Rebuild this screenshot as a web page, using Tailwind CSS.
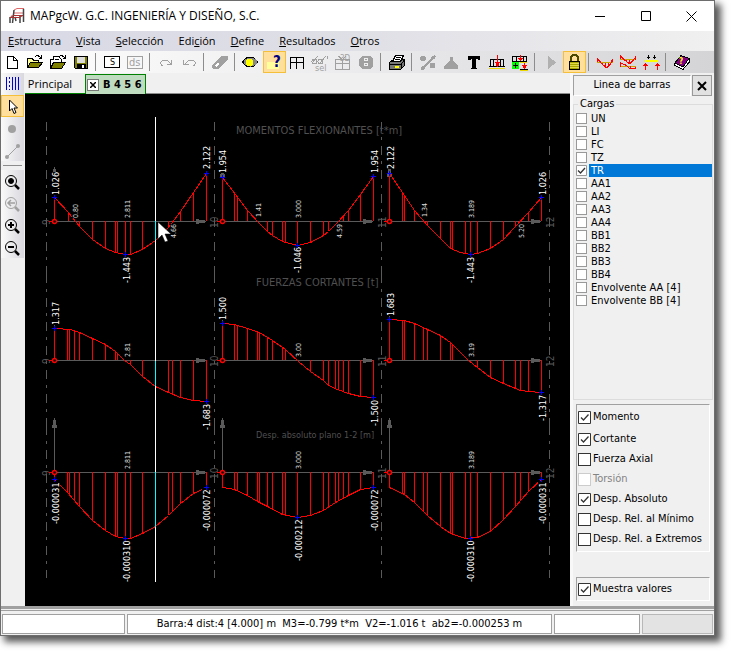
<!DOCTYPE html>
<html lang="es">
<head>
  <meta charset="UTF-8">
  <meta name="viewport" content="width=device-width, initial-scale=1.0">
  <title>MAPgcW</title>
  <script src="https://cdn.jsdelivr.net/npm/@tailwindcss/browser@4"></script>
</head>
<body class="h-screen overflow-hidden bg-white pr-[16px] pb-[15px] font-['DejaVu_Sans_Condensed','Noto_Sans',sans-serif] text-[11px] text-black">

  <div class="flex h-full flex-col border border-[#6d6d6d] bg-[#f0f0f0] shadow-[5px_5px_7px_1px_rgba(0,0,0,0.65)]">

    <!-- Title bar -->
    <header class="flex h-[30px] shrink-0 items-center bg-white font-['Open_Sans',sans-serif] text-xs">
      <svg class="ml-2 size-4" viewBox="0 0 16 16" fill="none">
        <path d="M5 2l3-1.500h7M5 5h9M2 8h3" stroke="#d66" />
        <path d="M5 2L3.500 15M1 9v6M6 9l1 4M14.500 1v13M11 8v7" stroke="#444" stroke-width="1.500" />
        <path d="M1 9.500l4-2h9M1 9.500h9l4-2" stroke="#a33" />
      </svg>
      <h1 class="ml-[5px] flex-1 whitespace-nowrap">MAPgcW. G.C. INGENIERÍA Y DISEÑO, S.C.</h1>
      <button aria-label="Minimizar" class="flex h-full w-[45px] items-center justify-center"><svg class="size-[11px]" viewBox="0 0 11 11"><path d="M0 5.500h10" stroke="#000" /></svg></button>
      <button aria-label="Maximizar" class="flex h-full w-[45px] items-center justify-center"><svg class="size-[11px]" viewBox="0 0 11 11"><path d="M1.500 .5h9v9h-9z" stroke="#000" fill="none" /></svg></button>
      <button aria-label="Cerrar" class="flex h-full w-[46px] items-center justify-center"><svg class="size-[11px]" viewBox="0 0 11 11"><path d="M.5 .5l10 10M10.500 .5l-10 10" stroke="#000" /></svg></button>
    </header>

    <!-- Menu -->
    <nav class="flex h-[20px] shrink-0 items-center gap-[15px] bg-linear-to-r from-[#d9d9e6] via-[#dfdfe6] to-[#f0f0f0] pl-[7px] font-['Open_Sans',sans-serif] text-[11px] whitespace-nowrap">
      <a href="#"><u>E</u>structura</a>
      <a href="#"><u>V</u>ista</a>
      <a href="#"><u>S</u>elección</a>
      <a href="#">Edi<u>c</u>ión</a>
      <a href="#"><u>D</u>efine</a>
      <a href="#"><u>R</u>esultados</a>
      <a href="#"><u>O</u>tros</a>
    </nav>

    <!-- Toolbar -->
    <div class="flex h-[22px] shrink-0 bg-linear-to-r from-white via-[#ebebed] to-[#d4d4d6] [&>button]:w-[23px] [&>button]:shrink-0 [&>i]:my-[2px] [&>i]:mr-[5px] [&>i]:ml-[2px] [&>i]:w-px [&>i]:bg-[#8c8c8c] [&_svg]:h-[22px] [&_svg]:w-[23px] [&_svg]:[shape-rendering:crispEdges]">
      <button aria-label="Nuevo"><svg viewBox="0 0 23 22"><path d="M6.500 5.500h6l4 4v8h-10zM12.500 5.500v4h4" fill="#fff" stroke="#000" /></svg></button>
      <button aria-label="Abrir"><svg viewBox="0 0 23 22"><path d="M3.500 16.500v-9h5l1 2h5v3" fill="#ff9" stroke="#000" /><path d="M3.500 16.500l3-5h12l-4 5z" fill="#808000" stroke="#000" /><path d="M11 6q3-3 6 1M17.500 4v3.500h-3" fill="none" stroke="#000" /></svg></button>
      <button aria-label="Importar"><svg viewBox="0 0 23 22"><path d="M3.500 17.500v-9h3v-3h5l3 3v4" fill="#fff" stroke="#000" /><path d="M3.500 17.500l3-6h12l-4 6z" fill="#808000" stroke="#000" /><path d="M8 8.500h4M12 6q3-3 6 1M18.500 4v3.500h-3" fill="none" stroke="#000" /></svg></button>
      <button aria-label="Guardar"><svg viewBox="0 0 23 22"><path d="M4.500 5.500h13v12h-12l-1-1z" fill="#808000" stroke="#000" /><path d="M7 6h8v6H7z" fill="#ddd" /><path d="M7 13h9v4H7z" /><path d="M12 14h2v3h-2z" fill="#fff" /></svg></button>
      <i></i>
      <button aria-label="S"><svg viewBox="0 0 23 22"><path d="M3.500 5.500h15v11h-15z" fill="#fff" stroke="#000" /><text x="9" y="14" font-size="8" font-family="DejaVu Sans">S</text></svg></button>
      <button aria-label="ds" disabled><svg viewBox="0 0 23 22"><path d="M3.500 5.500h15v12h-15z" fill="none" stroke="#a0a0a0" /><text x="5" y="15" font-size="11" fill="#a0a0a0">ds</text></svg></button>
      <i></i>
      <button aria-label="Rehacer" disabled><svg viewBox="0 0 23 22"><path d="M8 15q-4-2-1-5 4-3 9 3M16.500 8.500v5h-5" fill="none" stroke="#a0a0a0" /></svg></button>
      <button aria-label="Deshacer" disabled><svg viewBox="0 0 23 22"><path d="M15 15q4-2 1-5-4-3-9 3M5.500 8.500v5h5" fill="none" stroke="#a0a0a0" /></svg></button>
      <i></i>
      <button aria-label="Borrar" disabled><svg viewBox="0 0 23 22"><path d="M3 15l9-10h7v3l-9 10H4z" fill="#a0a0a0" /><path d="M6 14l3-3 1 2-3 3z" fill="#fff" /></svg></button>
      <i></i>
      <button aria-label="Ver"><svg viewBox="0 0 23 22"><path d="M2 11q2-5 8-5.500 6 .5 8 5.500-2 5-8 5.500-6-.5-8-5.500z" /><ellipse cx="10.500" cy="11" rx="6.500" ry="4.500" fill="#888" /><circle cx="9.500" cy="11.500" r="3.700" fill="#ff0" /></svg></button>
      <button aria-label="Ayuda" class="border border-[#f5bf3a] bg-[#ffdf9b]"><svg class="-m-px" viewBox="0 0 23 22"><path d="M4 11h12v7H4z" fill="#ffff9c" /><text x="10" y="16" font-size="15" font-weight="bold" fill="#000080">?</text></svg></button>
      <button aria-label="Ventanas"><svg viewBox="0 0 23 22"><path d="M4.500 18V6.500h13V18M4 11.500h14M10.500 6v12" fill="none" stroke="#000" /></svg></button>
      <button aria-label="Ver selección" disabled><svg viewBox="0 0 23 22" fill="none" stroke="#a0a0a0"><path d="M3 12l6-7M11 12l6-7M18 5v3" /><circle cx="5.500" cy="10.500" r="2.500" /><circle cx="11.500" cy="10.500" r="2.500" /><text x="6" y="20" font-size="9" fill="#a0a0a0" stroke="none">sel</text></svg></button>
      <button aria-label="Vista 3D" disabled><svg viewBox="0 0 23 22" fill="none" stroke="#a0a0a0"><path d="M3.500 8.500h14v10h-14zM3.500 12.500h14M10.500 8v10M10 8L6 5M11 8l3-3" /><text x="8" y="10" font-size="8" fill="#a0a0a0" stroke="none">3D</text></svg></button>
      <button aria-label="Numeración" disabled><svg viewBox="0 0 23 22"><path d="M7 5h8l3 3v7l-3 3H7l-3-3V8z" fill="#a0a0a0" /><path d="M9.500 7.500h3v2h-3zM9.500 12.500h3v2h-3z" fill="none" stroke="#eee" /></svg></button>
      <i></i>
      <button aria-label="Imprimir"><svg viewBox="0 0 23 22"><path d="M3.500 11.500l4-3h11v6l-4 4h-11z" fill="#777" stroke="#000" /><path d="M6.500 10.500l3-6h8l-3 6z" fill="#fff" stroke="#000" /><path d="M10 6.500h5M9 8.500h5M4 13.500h11l3-4M15 13v5" stroke="#000" fill="none" /><path d="M9 15.500h4" stroke="#ff0" stroke-width="2" /></svg></button>
      <i></i>
      <button aria-label="Nudos y barras" disabled><svg viewBox="0 0 23 22" fill="#a0a0a0"><path d="M6 17L18 5" stroke="#a0a0a0" stroke-width="2" /><circle cx="6" cy="7.500" r="2.700" /><circle cx="6" cy="17" r="2" /><circle cx="16.500" cy="6.500" r="2" /><circle cx="15.500" cy="14.500" r="2.700" /></svg></button>
      <button aria-label="Apoyos" disabled><svg viewBox="0 0 23 22" fill="#a0a0a0"><path d="M10 6h3v3l5 6v3H4v-3l6-6z" /></svg></button>
      <button aria-label="Texto"><svg viewBox="0 0 23 22"><path d="M5 5h12v4h-2l-1-1h-1v8l1 2H8l1-2V8H8l-1 1H5z" /></svg></button>
      <button aria-label="Cargas"><svg viewBox="0 0 23 22" fill="none"><path d="M3 15.500h16" stroke="#000" /><path d="M3 17.500h16" stroke="#ecd800" /><path d="M4.500 15V8.500h13V15M7.500 9v6M14.500 9v6" stroke="#000" /><path d="M11.500 4v10" stroke="red" /><path d="M9 11h5l-2 5h-1z" fill="red" /></svg></button>
      <button aria-label="Añadir carga"><svg viewBox="0 0 23 22" fill="none"><path d="M3.500 10V5.500h14V10M7.500 6v4M14.500 6v4M3 10.500h15M11 18.500h8" stroke="#000" /><path d="M11 11.500h7M11 19.500h8" stroke="#ecd800" /><path d="M11.500 4v4M15.500 12v4" stroke="red" /><path d="M9 7h5l-2 3h-1zM13 14h5l-2 4h-1z" fill="red" /><path d="M3 11h7v7H3z" fill="#0f0" /><path d="M4 14.500h5M6.500 12v5" stroke="#000" /></svg></button>
      <i></i>
      <button aria-label="Calcular" disabled><svg viewBox="0 0 23 22"><path d="M8 5l8 6.500L8 18z" fill="#b0b0b0" /></svg></button>
      <button aria-label="Bloquear" class="border border-[#f5bf3a] bg-[#ffdf9b]"><svg class="-m-px" viewBox="0 0 23 22"><path d="M8 11V7q0-3 3.500-3T15 7v4" fill="none" stroke="#4a4a00" stroke-width="2" /><path d="M6.500 10.500h10v8h-10z" fill="#aaa800" stroke="#000" /><path d="M7 12.500h9M7 14.500h9M7 16.500h9" stroke="#ded84a" /></svg></button>
      <i></i>
      <button aria-label="Momentos"><svg viewBox="0 0 23 22" fill="none"><path d="M3 11.500h16" stroke="#c8a800" /><path d="M3.500 11V7.500L8 13l3.500 3h2l3-3 2-5V11M8.500 12v2M11.500 12v4M14.500 12v3" stroke="red" /></svg></button>
      <button aria-label="Envolventes"><svg viewBox="0 0 23 22" fill="none"><path d="M3 8.500h16M3 15.500h16" stroke="#c8a800" /><path d="M3.500 8V5l4 4 4 3h2l3-3 2-3v3M9.500 9v2M12.500 9v3M3.500 16v-4l5 2 5 4 5-.5v-2M10.500 15v1M13.500 15v3" stroke="red" /></svg></button>
      <button aria-label="Reacciones"><svg viewBox="0 0 23 22" fill="none"><path d="M5 10h13" stroke="#ff0" stroke-width="2" /><path d="M8.500 4v4M7 6.500h3M14.500 4v4M13 6.500h3" stroke="#000" /><path d="M5.500 12v7M17.500 12v7" stroke="red" /><path d="M3 15l2-3h1l2 3zM15 15l2-3h1l2 3z" fill="red" /></svg></button>
      <i></i>
      <button aria-label="Manual"><svg viewBox="0 0 23 22"><path d="M3.500 12.500L10 4.500l8 3v4l-6 7-8-4z" fill="#fff" stroke="#000" /><path d="M4 12l6-7.500 8 3L12 16z" fill="#800080" stroke="#000" /><text x="8" y="13" font-size="8" font-weight="bold" fill="#ff0">?</text></svg></button>
    </div>

    <div class="flex min-h-0 flex-1">
      <!-- Drawing tools -->
      <aside class="w-[24px] shrink-0 [&_button]:block [&_button]:w-[23px] [&_svg]:h-[22px] [&_svg]:w-[23px]">
        <div class="w-[23px] bg-linear-to-r from-[#fafafa] to-[#d8d8de]">
          <button aria-label="Rejilla"><svg viewBox="0 0 23 22" stroke="#0000e0"><path d="M5.500 4v13M11.500 4v13M14.500 4v13M17.500 4v13" /><path d="M8.500 4v13" stroke-dasharray="2 2" /></svg></button>
          <button aria-label="Seleccionar" class="h-[22px] border border-[#f5bf3a] bg-[#ffdf9b]"><svg class="-m-px" viewBox="0 0 23 22"><path d="M8.500 5v11l2.500-2.500 2 5 2-1-2-4.500h3.500z" fill="#fff" stroke="#000" /></svg></button>
          <button aria-label="Nudo" disabled><svg viewBox="0 0 23 22"><circle cx="11" cy="12" r="4" fill="#a0a0a0" /></svg></button>
          <button aria-label="Barra" disabled><svg viewBox="0 0 23 22" fill="#a0a0a0"><path d="M6 18L17 7" stroke="#a0a0a0" /><circle cx="6" cy="18" r="2" /><circle cx="17" cy="7" r="2" /></svg></button>
        </div>
        <div class="my-[4px] ml-[2px] h-px w-[19px] bg-[#8c8c8c]"></div>
        <div class="w-[23px] bg-linear-to-r from-[#fafafa] to-[#d8d8de]">
          <button aria-label="Zoom ventana"><svg viewBox="0 0 23 22" fill="none" stroke="#000"><circle cx="10" cy="11" r="5.500" /><circle cx="10" cy="11" r="2.500" fill="#000" /><path d="M14 15l4 4" stroke-width="2.500" /></svg></button>
          <button aria-label="Zoom anterior" disabled><svg viewBox="0 0 23 22" fill="none" stroke="#a0a0a0"><circle cx="10" cy="11" r="5.500" /><path d="M14 15l4 4" stroke-width="2.500" /><path d="M7 11h7M10 8l-3 3 3 3" stroke-width="1.500" /></svg></button>
          <button aria-label="Acercar"><svg viewBox="0 0 23 22" fill="none" stroke="#000"><circle cx="10" cy="11" r="5.500" /><path d="M14 15l4 4" stroke-width="2.500" /><path d="M7 11h6M10 8v6" stroke-width="2" /></svg></button>
          <button aria-label="Alejar"><svg viewBox="0 0 23 22" fill="none" stroke="#000"><circle cx="10" cy="11" r="5.500" /><path d="M14 15l4 4" stroke-width="2.500" /><path d="M7 11h6" stroke-width="2" /></svg></button>
        </div>
      </aside>

      <main class="flex min-w-0 flex-1 flex-col">
        <!-- Tabs -->
        <div class="flex h-[21px] shrink-0">
          <button class="w-[60px] border-b border-[#008000] pt-[3px] pr-[10px] font-['Open_Sans',sans-serif] text-[11px]">Principal</button>
          <div class="mt-px flex w-[61px] items-center gap-[4px] border border-b-0 border-[#008000] bg-[#c0dcc0] pl-px">
            <button aria-label="Cerrar pestaña" class="flex size-[12px] items-center justify-center border border-[#777] bg-white"><svg class="size-[6px]" viewBox="0 0 6 6"><path d="M0 0l6 6M6 0L0 6" stroke="#000" stroke-width="1.500" /></svg></button>
            <button class="pt-[2px] text-[11px] font-bold whitespace-nowrap">B 4 5 6</button>
          </div>
          <div class="flex-1 border-b border-[#8c8c8c]"></div>
        </div>
        <div class="min-h-0 flex-1 overflow-hidden bg-black">
          <svg class="size-full"><g id="plot" transform="translate(-25 -94)"></g></svg>
        </div>
      </main>

      <!-- Side panel -->
      <section class="flex w-[144px] shrink-0 flex-col border-l-[3px] border-[#f8f8f8] pt-[2px]">
        <div class="flex h-[21px] shrink-0 gap-px pr-[2px]">
          <h2 class="flex flex-1 items-center justify-center border border-t-[#a0a0a0] border-r-white border-b-white border-l-[#a0a0a0]">Linea de barras</h2>
          <button aria-label="Cerrar panel" class="flex w-[20px] items-center justify-center border border-[#999] bg-[#e1e1e1]"><svg class="size-[10px]" viewBox="0 0 10 10"><path d="M1 1l8 8M9 1L1 9" stroke="#000" stroke-width="2" /></svg></button>
        </div>
        <fieldset class="mr-px h-[304px] border border-[#dcdcdc] pl-[2px]">
          <legend class="ml-[2px] px-[2px] leading-[16px]">Cargas</legend>
          <div id="loads" class="flex flex-col"></div>
        </fieldset>
        <div class="mt-[4px] mr-[4px] ml-[3px] flex flex-col border border-t-[#a0a0a0] border-r-white border-b-white border-l-[#a0a0a0] py-[2px] pl-px [&_label]:flex [&_label]:h-[20px] [&_label]:items-center [&_label]:gap-[2px] [&_label]:whitespace-nowrap">
          <label class="mb-[2px]"><input type="checkbox" checked class="sr-only"><svg class="size-[13px]" viewBox="0 0 13 13"><path d="M.5 .5h12v12h-12z" fill="#fff" stroke="#333" /><path d="M3 6.500l2.500 2.500L10.500 3.500" fill="none" stroke="#333" stroke-width="1.300" /></svg>Momento</label>
          <label><input type="checkbox" checked class="sr-only"><svg class="size-[13px]" viewBox="0 0 13 13"><path d="M.5 .5h12v12h-12z" fill="#fff" stroke="#333" /><path d="M3 6.500l2.500 2.500L10.500 3.500" fill="none" stroke="#333" stroke-width="1.300" /></svg>Cortante</label>
          <label><input type="checkbox" class="size-[13px] appearance-none border border-[#333] bg-white">Fuerza Axial</label>
          <label class="text-[#838383]"><input type="checkbox" disabled class="size-[13px] appearance-none border border-[#ccc] bg-white">Torsión</label>
          <label><input type="checkbox" checked class="sr-only"><svg class="size-[13px]" viewBox="0 0 13 13"><path d="M.5 .5h12v12h-12z" fill="#fff" stroke="#333" /><path d="M3 6.500l2.500 2.500L10.500 3.500" fill="none" stroke="#333" stroke-width="1.300" /></svg>Desp. Absoluto</label>
          <label><input type="checkbox" class="size-[13px] appearance-none border border-[#333] bg-white">Desp. Rel. al Mínimo</label>
          <label><input type="checkbox" class="size-[13px] appearance-none border border-[#333] bg-white">Desp. Rel. a Extremos</label>
        </div>
        <div class="mt-auto mr-[4px] mb-[5px] ml-[3px] border border-t-[#a0a0a0] border-r-white border-b-white border-l-[#a0a0a0] pl-px">
          <label class="flex h-[22px] items-center gap-[2px]"><input type="checkbox" checked class="sr-only"><svg class="size-[13px]" viewBox="0 0 13 13"><path d="M.5 .5h12v12h-12z" fill="#fff" stroke="#333" /><path d="M3 6.500l2.500 2.500L10.500 3.500" fill="none" stroke="#333" stroke-width="1.300" /></svg>Muestra valores</label>
        </div>
      </section>
    </div>

    <!-- Status bar -->
    <footer class="shrink-0 border-t-[3px] border-[#a0a0a0]">
      <div class="mt-px flex h-[25px] gap-[2px] border-t border-[#a0a0a0] pt-[3px] pr-px pb-px pl-px">
        <div class="w-[123px] border border-[#a0a0a0] bg-white"></div>
        <output class="flex flex-1 items-center justify-center border border-[#a0a0a0] bg-white whitespace-pre">Barra:4 dist:4 [4.000] m  M3=-0.799 t*m  V2=-1.016 t  ab2=-0.000253 m</output>
        <div class="w-[86px] border border-[#a0a0a0] bg-white"></div>
        <div class="w-[71px] border border-[#b8b8b8] bg-[#e3e3e3]"></div>
      </div>
    </footer>
  </div>

  <script>
    // Load cases
    const loads = ['UN', 'LI', 'FC', 'TZ', 'TR', 'AA1', 'AA2', 'AA3', 'AA4', 'BB1', 'BB2', 'BB3', 'BB4', 'Envolvente AA [4]', 'Envolvente BB [4]'];
    document.getElementById('loads').innerHTML = loads.map(name => {
      const on = name === 'TR';
      const box = on
        ? '<input type="checkbox" checked class="sr-only"><svg class="size-[11px]" viewBox="0 0 11 11"><path d="M.5 .5h10v10h-10z" fill="#fff" stroke="#999"/><path d="M2 5.500l2.500 2.500L9 3" fill="none" stroke="#333" stroke-width="1.300"/></svg>'
        : '<input type="checkbox" class="size-[11px] appearance-none border border-[#999] bg-white">';
      return `<label class="flex h-[13px] items-center gap-[2px] whitespace-nowrap">${box}<span class="flex-1 pl-[2px] leading-[13px] ${on ? 'bg-[#0078d7] text-white' : ''}">${name}</span></label>`;
    }).join('');

    // Diagrams: base line y, curve points, ordinates and marked extremes
    const diagrams = [
      { y: 221, pts: [[54,197],[68,212],[79,226],[92,239],[105,248],[115,252],[125,254],[130,254],[142,249],[155,240],[168,227],[180,211],[193,192],[206,173]], bars: [54,68,79,92,105,115,117,125,130,142,168,180,193,206], marks: [54,125,206] },
      { y: 221, pts: [[222,177],[235,194],[247,210],[259,223],[267,231],[272,235],[282,241],[297,245],[310,242],[323,235],[328,231],[337,222],[348,210],[360,194],[373,176]], bars: [222,234,237,247,267,272,282,285,297,310,323,328,343,348,360,373], marks: [222,297,373] },
      { y: 221, pts: [[389,173],[402,192],[414,210],[427,225],[440,238],[450,248],[460,252],[470,254],[477,253],[490,248],[503,239],[514,227],[528,212],[541,197]], bars: [389,402,404,414,427,440,450,452,465,470,477,490,503,515,528,541], marks: [389,470,541] },
      { y: 360, pts: [[54,328],[70,329],[79,332],[92,338],[105,344],[115,351],[124,360],[130,364],[142,376],[155,386],[168,392],[180,397],[193,400],[206,401]], bars: [54,67,69,74,79,92,105,115,117,130,142,168,172,180,193,206], marks: [54,206] },
      { y: 360, pts: [[222,323],[234,324],[247,328],[259,332],[272,340],[285,349],[298,361],[310,371],[323,380],[328,385],[337,389],[348,393],[360,396],[373,397]], bars: [222,234,237,247,257,259,267,272,282,285,310,323,328,335,338,343,348,360,373], marks: [222,373] },
      { y: 360, pts: [[389,319],[404,320],[414,323],[427,329],[440,335],[450,342],[468,360],[477,367],[490,377],[503,383],[520,390],[528,391],[541,392]], bars: [389,402,404,414,423,427,440,450,452,477,490,503,515,520,528,541], marks: [389,541] },
      { y: 472, pts: [[54,479],[67,492],[79,506],[92,520],[105,530],[115,536],[125,538],[130,538],[142,533],[155,526],[168,515],[180,503],[193,493],[206,487]], bars: [54,67,69,74,79,92,105,115,117,125,130,142,168,172,180,193,206], marks: [54,125,206] },
      { y: 472, pts: [[222,487],[234,489],[247,495],[257,501],[267,506],[282,514],[297,517],[310,515],[323,510],[335,502],[348,495],[360,489],[373,487]], bars: [222,234,237,247,257,259,267,272,282,285,297,310,323,328,335,338,343,348,360,373], marks: [297,373] },
      { y: 472, pts: [[389,487],[404,494],[414,502],[427,515],[440,526],[450,533],[465,538],[477,537],[490,531],[503,519],[515,506],[528,491],[541,479]], bars: [389,402,404,414,423,427,440,450,452,465,470,477,490,503,515,520,528,541], marks: [470,541] }
    ];

    // Vertical labels: x of the base line, y of the first character, text
    const values = [
      [59,195,'1.026'],[210,169,'2.122'],[130,283,'-1.443'],[226,173,'1.954'],[301,273,'-1.046'],[378,173,'1.954'],[394,169,'2.122'],[474,283,'-1.443'],[546,195,'1.026'],
      [59,325,'1.317'],[210,430,'-1.683'],[226,320,'1.500'],[378,426,'-1.500'],[394,316,'1.683'],[546,421,'-1.317'],
      [59,524,'-0.000031'],[130,582,'-0.000310'],[210,531,'-0.000072'],[302,561,'-0.000212'],[378,531,'-0.000072'],[474,582,'-0.000310'],[546,524,'-0.000031']
    ];
    const distances = [
      [78,218,'0.80'],[130,218,'2.811'],[176,238,'4.66'],[261,217,'1.41'],[301,218,'3.000'],[342,238,'4.59'],[427,217,'1.34'],[474,218,'3.189'],[524,238,'5.20'],
      [130,357,'2.81'],[301,357,'3.00'],[474,357,'3.19'],
      [130,469,'2.811'],[301,469,'3.000'],[474,469,'3.189']
    ];

    function heightAt(pts, x) {
      const i = Math.max(1, pts.findIndex(p => p[0] >= x));
      const [a, b] = [pts[i - 1], pts[i]];
      return Math.round(a[1] + (b[1] - a[1]) * (x - a[0]) / (b[0] - a[0]));
    }
    const line = (d, color) => `<path d="${d}" stroke="${color}" fill="none" shape-rendering="crispEdges"/>`;
    const label = (x, y, text, size, color, length) =>
      `<rect x="${x - size + 1}" y="${y - length}" width="${size}" height="${length}" fill="#000"/><text transform="translate(${x} ${y}) rotate(-90)" font-size="${size}" fill="${color}">${text}</text>`;

    let out = '';
    for (const x of [46, 214, 381, 549])
      for (const y of [122, 274, 426])
        out += `<path d="M${x}.5 ${y}v152" stroke="#5a5a5a" stroke-dasharray="9 6 3 6" shape-rendering="crispEdges"/>`;

    out += '<g fill="#505050"><text x="236" y="134">MOMENTOS FLEXIONANTES [t*m]</text><text x="256" y="286">FUERZAS CORTANTES [t]</text><text x="256" y="438" font-size="9">Desp. absoluto plano 1-2 [m]</text></g>';

    for (const d of diagrams) {
      const x0 = d.pts[0][0], x1 = d.pts[d.pts.length - 1][0], y = d.y;
      out += line(`M${x0} ${y}.5H${x1}M${x0}.5 ${y}v-54`, '#5a5a5a');
      out += `<path d="M${x1 - 10} ${y - 2}h3v1h6v3h-6v1h-3zM${x0 - 2} ${y - 44}v-3h1v-5h3v5h1v3z" fill="#5a5a5a" shape-rendering="crispEdges"/>`;
      out += line(d.bars.map(x => `M${x}.5 ${y}V${heightAt(d.pts, x)}`).join(''), '#f00');
      out += line('M' + d.pts.map(p => `${p[0]}.5 ${p[1]}.5`).join('L'), '#f00');
    }
    for (const [x, y, t] of values) out += label(x, y, t, 9, '#fff', t.length * 5 - 2);
    for (const [x, y, t] of distances) out += label(x, y, t, 7, '#ddd', t.length * 4 - 2);
    for (const y of [221, 360, 472])
      [[50, 4, '9'], [218, 7, '10'], [386, 7, '11'], [554, 7, '12']].forEach(([x, dy, t]) => {
        out += `<text transform="translate(${x} ${y + dy}) rotate(-90)" font-size="10" fill="#5a5a5a">${t}</text>`;
      });

    // Bar origins and extreme marks
    for (const d of diagrams) {
      const x0 = d.pts[0][0];
      out += `<circle cx="${x0}.5" cy="${d.y}.5" r="2" fill="#000" stroke="#f00" stroke-width="1.500"/>` + line(`M${x0 - 5} ${d.y}.5h3`, '#f00');
      for (const x of d.marks) {
        const my = heightAt(d.pts, x);
        out += line(`M${x - 2} ${my}.5h5M${x}.5 ${my - 2}v5`, '#00f');
      }
    }

    // Section cursor and mouse pointer
    out += line('M155.500 117V582', '#fff');
    out += line('M155.500 221V240M155.500 361V386M155.500 472V527', '#0ff');
    out += '<path d="M158 222v17l4-4 3 7 3-1-3-7h6z" fill="#fff" stroke="#000" stroke-width=".5"/>';
    document.getElementById('plot').innerHTML = out;
  </script>
</body>
</html>
